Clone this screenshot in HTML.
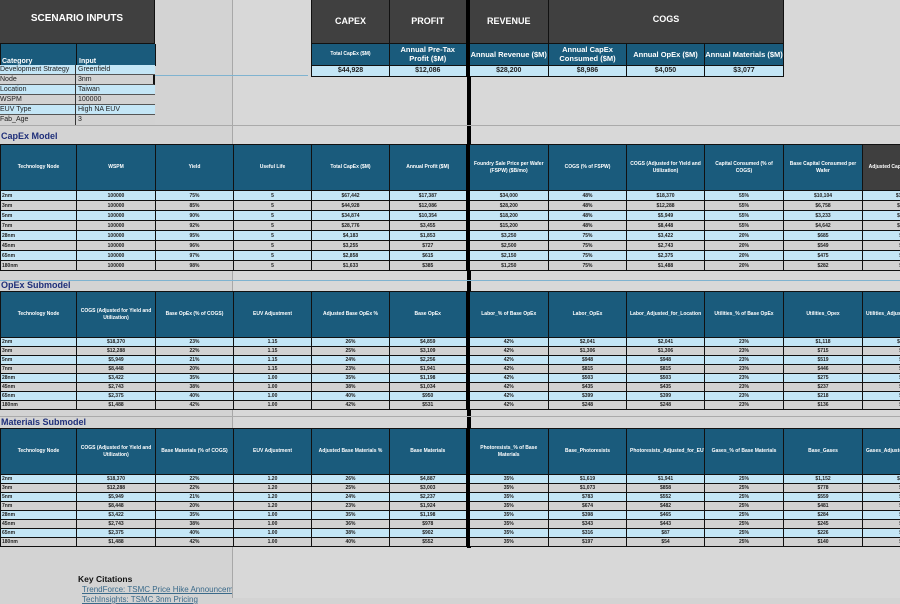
<!DOCTYPE html>
<html><head><meta charset="utf-8"><style>
*{margin:0;padding:0;box-sizing:border-box}
body{width:900px;height:598px;overflow:hidden;background:#d3d3d3;font-family:"Liberation Sans",sans-serif;position:relative}
.abs{position:absolute}
.vl{position:absolute;left:232px;top:0;width:1px;height:598px;background:#a8a8a8}
.right{position:absolute;left:233px;top:0;width:667px;height:598px;background:#d8d8d8}
table{border-collapse:collapse;table-layout:fixed}
td{border:1.5px solid #111;text-align:center;overflow:hidden;white-space:nowrap;font-weight:bold}
.sec{position:absolute;left:0;width:900px;overflow:hidden}
.sec table{width:941px}
.h td{background:#1a5b7c;color:#fff;font-size:5px;height:46px;white-space:normal;line-height:7px;padding:0 3px}
.h td.dk{background:#3f3f3f}
.r td{height:10px;font-size:5px;color:#222;line-height:6px;padding:0}
.s9 .r td{height:9px}
.r.b td{background:#c4e6f6}
.r.g td{background:#d2d2d2}
.r td:first-child{text-align:left;padding-left:1px}
.tk{border-left:4px solid #000 !important}
.lbl{position:absolute;left:1px;font-size:9px;font-weight:bold;color:#1f2f7a}
.lblline{position:absolute;left:0;width:900px;height:1px;background:#aaa}
</style></head><body>
<div class="right"></div>
<div class="vl"></div>
<div class="abs" style="left:467px;top:0;width:4px;height:548px;background:#000"></div>

<!-- Scenario -->
<div class="abs" style="left:0;top:0;width:155px;height:44px;background:#404040;border-right:1.5px solid #111;border-bottom:1.5px solid #111;color:#fff;font-size:10px;font-weight:bold;text-align:center;line-height:38px">SCENARIO INPUTS</div>
<table class="abs" style="left:0;top:44px;width:155px">
<colgroup><col style="width:76px"><col style="width:79px"></colgroup>
<tr><td style="background:#1a5b7c;color:#fff;font-size:7px;height:21px;text-align:left;vertical-align:bottom;padding-left:1px;border-top:none">Category</td><td style="background:#1a5b7c;color:#fff;font-size:7px;text-align:left;vertical-align:bottom;padding-left:2px;border-top:none">Input</td></tr>
</table>
<div class="abs" style="left:0;top:65px;width:155px;font-size:7px;color:#222;line-height:10px">
<div style="background:#c4e6f6;height:10px;border-bottom:1px solid #555"><span style="display:inline-block;width:76px;overflow:hidden;white-space:nowrap;border-right:1px solid #333;vertical-align:top">Development Strategy</span><span style="padding-left:2px">Greenfield</span></div>
<div style="background:#d2d2d2;height:10px;border-bottom:1px solid #555;border-right:2px solid #111"><span style="display:inline-block;width:76px;border-right:1px solid #333;vertical-align:top">Node</span><span style="padding-left:2px">3nm</span></div>
<div style="background:#c4e6f6;height:10px;border-bottom:1px solid #555"><span style="display:inline-block;width:76px;border-right:1px solid #333;vertical-align:top">Location</span><span style="padding-left:2px">Taiwan</span></div>
<div style="background:#d2d2d2;height:10px;border-bottom:1px solid #555"><span style="display:inline-block;width:76px;border-right:1px solid #333;vertical-align:top">WSPM</span><span style="padding-left:2px">100000</span></div>
<div style="background:#c4e6f6;height:10px;border-bottom:1px solid #555"><span style="display:inline-block;width:76px;border-right:1px solid #333;vertical-align:top">EUV Type</span><span style="padding-left:2px">High NA EUV</span></div>
<div style="background:#d2d2d2;height:10px"><span style="display:inline-block;width:76px;border-right:1px solid #333;vertical-align:top">Fab_Age</span><span style="padding-left:2px">3</span></div>
</div>
<div class="abs" style="left:155px;top:75px;width:153px;height:1px;background:#7fb3d0"></div>

<!-- Summary -->
<table class="abs" style="left:311px;top:0;width:472px">
<colgroup><col style="width:78px"><col style="width:78px"><col style="width:81px"><col style="width:78px"><col style="width:78px"><col style="width:79px"></colgroup>
<tr style="height:43px"><td style="background:#404040;color:#fff;font-size:9px;border-top:none">CAPEX</td><td style="background:#404040;color:#fff;font-size:9px;border-top:none">PROFIT</td><td class="tk" style="background:#404040;color:#fff;font-size:9px;border-top:none">REVENUE</td><td colspan="3" style="background:#404040;color:#fff;font-size:9px;border-top:none;vertical-align:middle;padding-bottom:5px">COGS</td></tr>
<tr style="height:22px"><td style="background:#1a5b7c;color:#fff;font-size:5px">Total CapEx ($M)</td><td style="background:#1a5b7c;color:#fff;font-size:7.5px;white-space:normal;line-height:9px">Annual Pre-Tax Profit ($M)</td><td class="tk" style="background:#1a5b7c;color:#fff;font-size:7.5px;white-space:normal;line-height:9px">Annual Revenue ($M)</td><td style="background:#1a5b7c;color:#fff;font-size:7.5px;white-space:normal;line-height:9px">Annual CapEx Consumed ($M)</td><td style="background:#1a5b7c;color:#fff;font-size:7.5px;white-space:normal;line-height:9px">Annual OpEx ($M)</td><td style="background:#1a5b7c;color:#fff;font-size:7.5px;white-space:normal;line-height:9px">Annual Materials ($M)</td></tr>
<tr style="height:11px;font-size:7px"><td style="background:#c4e6f6;font-size:7px;color:#222">$44,928</td><td style="background:#c4e6f6;font-size:7px;color:#222">$12,086</td><td class="tk" style="background:#c4e6f6;font-size:7px;color:#222">$28,200</td><td style="background:#c4e6f6;font-size:7px;color:#222">$8,986</td><td style="background:#c4e6f6;font-size:7px;color:#222">$4,050</td><td style="background:#c4e6f6;font-size:7px;color:#222">$3,077</td></tr>
</table>

<!-- CapEx -->
<div class="lblline" style="top:125px"></div>
<div class="lbl" style="top:131px">CapEx Model</div>
<div class="sec" style="top:144px"><table>
<colgroup><col style="width:76px"><col style="width:79px"><col style="width:78px"><col style="width:78px"><col style="width:78px"><col style="width:78px"><col style="width:81px"><col style="width:78px"><col style="width:78px"><col style="width:79px"><col style="width:79px"><col style="width:79px"></colgroup>
<tr class="h"><td>Technology Node</td><td>WSPM</td><td>Yield</td><td>Useful Life</td><td>Total CapEx ($M)</td><td>Annual Profit ($M)</td><td class="tk">Foundry Sale Price per Wafer (FSPW) ($B/mo)</td><td>COGS (% of FSPW)</td><td>COGS (Adjusted for Yield and Utilization)</td><td>Capital Consumed (% of COGS)</td><td>Base Capital Consumed per Wafer</td><td class="dk">Adjusted Capital Consumed</td></tr>
<tr class="r b"><td>2nm</td><td>100000</td><td>75%</td><td>5</td><td>$67,442</td><td>$17,387</td><td class="tk">$34,000</td><td>48%</td><td>$18,370</td><td>55%</td><td>$10,104</td><td>$11,1</td></tr>
<tr class="r g"><td>3nm</td><td>100000</td><td>85%</td><td>5</td><td>$44,928</td><td>$12,086</td><td class="tk">$28,200</td><td>48%</td><td>$12,288</td><td>55%</td><td>$6,758</td><td>$1,4</td></tr>
<tr class="r b"><td>5nm</td><td>100000</td><td>90%</td><td>5</td><td>$34,874</td><td>$10,354</td><td class="tk">$18,200</td><td>48%</td><td>$5,949</td><td>55%</td><td>$3,233</td><td>$1,3</td></tr>
<tr class="r g"><td>7nm</td><td>100000</td><td>92%</td><td>5</td><td>$28,776</td><td>$3,455</td><td class="tk">$15,200</td><td>48%</td><td>$8,448</td><td>55%</td><td>$4,642</td><td>$1,2</td></tr>
<tr class="r b"><td>28nm</td><td>100000</td><td>95%</td><td>5</td><td>$4,183</td><td>$1,853</td><td class="tk">$3,250</td><td>75%</td><td>$3,422</td><td>20%</td><td>$685</td><td>$8</td></tr>
<tr class="r g"><td>45nm</td><td>100000</td><td>96%</td><td>5</td><td>$3,255</td><td>$727</td><td class="tk">$2,500</td><td>75%</td><td>$2,743</td><td>20%</td><td>$549</td><td>$3</td></tr>
<tr class="r b"><td>65nm</td><td>100000</td><td>97%</td><td>5</td><td>$2,858</td><td>$615</td><td class="tk">$2,150</td><td>75%</td><td>$2,375</td><td>20%</td><td>$475</td><td>$6</td></tr>
<tr class="r g"><td>180nm</td><td>100000</td><td>98%</td><td>5</td><td>$1,633</td><td>$385</td><td class="tk">$1,250</td><td>75%</td><td>$1,488</td><td>20%</td><td>$282</td><td>$3</td></tr>
</table></div>

<!-- OpEx -->
<div class="lblline" style="top:280px;background:#7fb3d0"></div>
<div class="lbl" style="top:280px">OpEx Submodel</div>
<div class="sec s9" style="top:291px"><table>
<colgroup><col style="width:76px"><col style="width:79px"><col style="width:78px"><col style="width:78px"><col style="width:78px"><col style="width:78px"><col style="width:81px"><col style="width:78px"><col style="width:78px"><col style="width:79px"><col style="width:79px"><col style="width:79px"></colgroup>
<tr class="h"><td>Technology Node</td><td>COGS (Adjusted for Yield and Utilization)</td><td>Base OpEx (% of COGS)</td><td>EUV Adjustment</td><td>Adjusted Base OpEx %</td><td>Base OpEx</td><td class="tk">Labor_% of Base OpEx</td><td>Labor_OpEx</td><td>Labor_Adjusted_for_Location</td><td>Utilities_% of Base OpEx</td><td>Utilities_Opex</td><td>Utilities_Adjusted_for_EUV_Type</td></tr>
<tr class="r b"><td>2nm</td><td>$18,370</td><td>23%</td><td>1.15</td><td>26%</td><td>$4,859</td><td class="tk">42%</td><td>$2,041</td><td>$2,041</td><td>23%</td><td>$1,118</td><td>$1,2</td></tr>
<tr class="r g"><td>3nm</td><td>$12,288</td><td>22%</td><td>1.15</td><td>25%</td><td>$3,109</td><td class="tk">42%</td><td>$1,306</td><td>$1,306</td><td>23%</td><td>$715</td><td>$8</td></tr>
<tr class="r b"><td>5nm</td><td>$5,949</td><td>21%</td><td>1.15</td><td>24%</td><td>$2,256</td><td class="tk">42%</td><td>$948</td><td>$948</td><td>23%</td><td>$519</td><td>$5</td></tr>
<tr class="r g"><td>7nm</td><td>$8,448</td><td>20%</td><td>1.15</td><td>23%</td><td>$1,941</td><td class="tk">42%</td><td>$815</td><td>$815</td><td>23%</td><td>$446</td><td>$4</td></tr>
<tr class="r b"><td>28nm</td><td>$3,422</td><td>35%</td><td>1.00</td><td>35%</td><td>$1,198</td><td class="tk">42%</td><td>$503</td><td>$503</td><td>23%</td><td>$275</td><td>$2</td></tr>
<tr class="r g"><td>45nm</td><td>$2,743</td><td>38%</td><td>1.00</td><td>38%</td><td>$1,034</td><td class="tk">42%</td><td>$435</td><td>$435</td><td>23%</td><td>$237</td><td>$2</td></tr>
<tr class="r b"><td>65nm</td><td>$2,375</td><td>40%</td><td>1.00</td><td>40%</td><td>$950</td><td class="tk">42%</td><td>$399</td><td>$399</td><td>23%</td><td>$218</td><td>$2</td></tr>
<tr class="r g"><td>180nm</td><td>$1,488</td><td>42%</td><td>1.00</td><td>42%</td><td>$531</td><td class="tk">42%</td><td>$248</td><td>$248</td><td>23%</td><td>$136</td><td>$1</td></tr>
</table></div>

<!-- Materials -->
<div class="lblline" style="top:416px"></div>
<div class="lbl" style="top:417px">Materials Submodel</div>
<div class="sec s9" style="top:428px"><table>
<colgroup><col style="width:76px"><col style="width:79px"><col style="width:78px"><col style="width:78px"><col style="width:78px"><col style="width:78px"><col style="width:81px"><col style="width:78px"><col style="width:78px"><col style="width:79px"><col style="width:79px"><col style="width:79px"></colgroup>
<tr class="h"><td>Technology Node</td><td>COGS (Adjusted for Yield and Utilization)</td><td>Base Materials (% of COGS)</td><td>EUV Adjustment</td><td>Adjusted Base Materials %</td><td>Base Materials</td><td class="tk">Photoresists_% of Base Materials</td><td>Base_Photoresists</td><td>Photoresists_Adjusted_for_EUV_Type_and_Node</td><td>Gases_% of Base Materials</td><td>Base_Gases</td><td>Gases_Adjusted_for_Location</td></tr>
<tr class="r b"><td>2nm</td><td>$18,370</td><td>22%</td><td>1.20</td><td>26%</td><td>$4,887</td><td class="tk">35%</td><td>$1,619</td><td>$1,941</td><td>25%</td><td>$1,152</td><td>$1,2</td></tr>
<tr class="r g"><td>3nm</td><td>$12,288</td><td>22%</td><td>1.20</td><td>25%</td><td>$3,003</td><td class="tk">35%</td><td>$1,073</td><td>$858</td><td>25%</td><td>$778</td><td>$8</td></tr>
<tr class="r b"><td>5nm</td><td>$5,949</td><td>21%</td><td>1.20</td><td>24%</td><td>$2,237</td><td class="tk">35%</td><td>$783</td><td>$552</td><td>25%</td><td>$559</td><td>$5</td></tr>
<tr class="r g"><td>7nm</td><td>$8,448</td><td>20%</td><td>1.20</td><td>23%</td><td>$1,924</td><td class="tk">35%</td><td>$674</td><td>$482</td><td>25%</td><td>$481</td><td>$4</td></tr>
<tr class="r b"><td>28nm</td><td>$3,422</td><td>35%</td><td>1.00</td><td>35%</td><td>$1,198</td><td class="tk">35%</td><td>$398</td><td>$465</td><td>25%</td><td>$284</td><td>$2</td></tr>
<tr class="r g"><td>45nm</td><td>$2,743</td><td>38%</td><td>1.00</td><td>36%</td><td>$978</td><td class="tk">35%</td><td>$343</td><td>$443</td><td>25%</td><td>$245</td><td>$2</td></tr>
<tr class="r b"><td>65nm</td><td>$2,375</td><td>40%</td><td>1.00</td><td>38%</td><td>$902</td><td class="tk">35%</td><td>$316</td><td>$87</td><td>25%</td><td>$226</td><td>$2</td></tr>
<tr class="r g"><td>180nm</td><td>$1,488</td><td>42%</td><td>1.00</td><td>40%</td><td>$552</td><td class="tk">35%</td><td>$197</td><td>$54</td><td>25%</td><td>$140</td><td>$1</td></tr>
</table></div>

<div class="abs" style="left:78px;top:574px;font-size:8.5px;font-weight:bold;color:#111">Key Citations</div>
<div class="abs" style="left:82px;top:585px;width:150px;overflow:hidden;white-space:nowrap;font-size:8px;color:#3a6a8a;text-decoration:underline">TrendForce: TSMC Price Hike Announcement</div>
<div class="abs" style="left:82px;top:595px;width:150px;overflow:hidden;white-space:nowrap;font-size:8px;color:#3a6a8a;text-decoration:underline">TechInsights: TSMC 3nm Pricing</div>
</body></html>
